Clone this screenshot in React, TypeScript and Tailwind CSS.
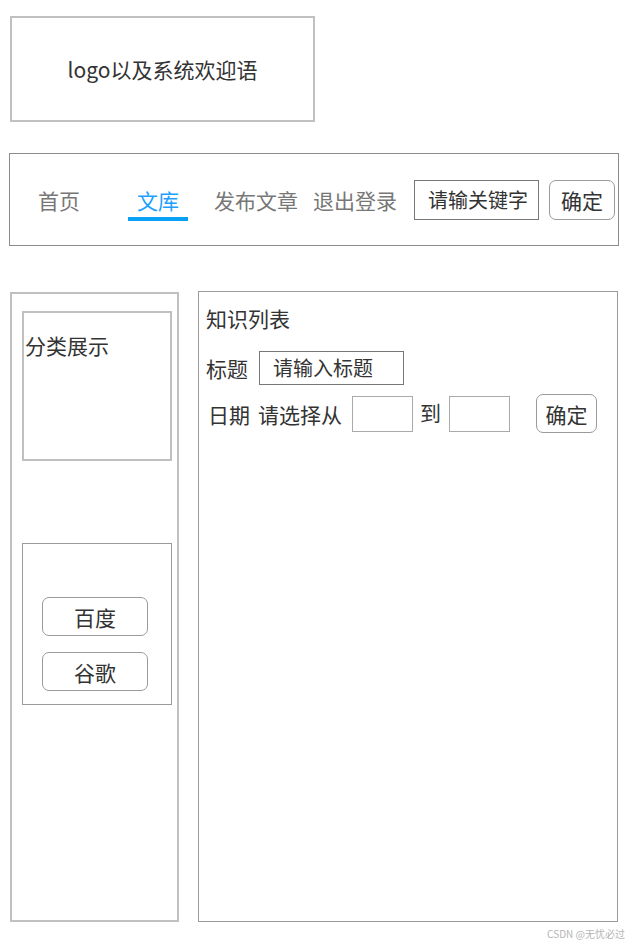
import React from "react";

const font = "font-['Noto_Sans_CJK_SC','Noto_Sans',sans-serif]";

export default function App() {
  return (
    <div className={`w-[632px] h-[945px] bg-white text-[#333] ${font}`}>
      <div className="pt-[16px] pl-[10px]">
        <div className="w-[305px] h-[106px] border-2 border-[#c0c0c0] flex items-center justify-center text-[21px] leading-[28px] text-[#333]">
          logo以及系统欢迎语
        </div>
      </div>

      <div className="mt-[31px] ml-[9px] w-[610px] h-[93px] border border-[#8c8c8c] flex items-center text-[21px] leading-[28px]">
        <div className="ml-[28px] text-[#777]">首页</div>
        <div className="ml-[48px] w-[60px] relative text-center text-[#1e9fff]">
          文库
          <span className="absolute left-0 top-[31px] w-[60px] h-[4px] bg-[#0aa0f5]" />
        </div>
        <div className="ml-[26px] text-[#777]">发布文章</div>
        <div className="ml-[15px] text-[#777]">退出登录</div>
        <div className="ml-[17px] w-[125px] h-[40px] border border-[#777] flex items-center pl-[13px] text-[#333] text-[20px]">
          请输关键字
        </div>
        <div className="ml-[10px] w-[66px] h-[40px] border border-[#9a9a9a] rounded-[7px] flex items-center justify-center text-[#333]">
          确定
        </div>
      </div>

      <div className="mt-[45px] flex items-start text-[21px] leading-[28px]">
        <div className="mt-[1px] ml-[10px] w-[169px] h-[630px] border-2 border-[#c0c0c0]">
          <div className="mt-[17px] ml-[10px] w-[150px] h-[150px] border-2 border-[#c0c0c0] pt-[18px] pl-[1px]">
            分类展示
          </div>
          <div className="mt-[82px] ml-[10px] w-[150px] h-[162px] border border-[#9a9a9a] pt-[53px] pl-[19px] flex flex-col gap-[16px]">
            <div className="w-[106px] h-[39px] border border-[#9a9a9a] rounded-[7px] flex items-center justify-center">
              百度
            </div>
            <div className="w-[106px] h-[39px] border border-[#9a9a9a] rounded-[7px] flex items-center justify-center">
              谷歌
            </div>
          </div>
        </div>

        <div className="ml-[19px] w-[420px] h-[631px] border border-[#9a9a9a] pl-[7px] pt-[12px]">
          <div>知识列表</div>
          <div className="mt-[19px] flex items-center h-[34px]">
            <div>标题</div>
            <div className="ml-[11px] w-[145px] h-[34px] border border-[#777] flex items-center pl-[13px] text-[20px]">
              请输入标题
            </div>
          </div>
          <div className="mt-[9px] flex items-center h-[39px]">
            <div className="ml-[2px]">日期</div>
            <div className="ml-[8px]">请选择从</div>
            <div className="ml-[10px] w-[61px] h-[36px] border border-[#aaa]" />
            <div className="ml-[7px] -mt-[4px]">到</div>
            <div className="ml-[8px] w-[61px] h-[36px] border border-[#aaa]" />
            <div className="ml-[26px] w-[61px] h-[39px] border border-[#9a9a9a] rounded-[7px] flex items-center justify-center">
              确定
            </div>
          </div>
        </div>
      </div>

      <div className="mt-[5px] pr-[7px] text-right text-[10px] leading-[14px] text-[#b5b5b5]">
        CSDN @无忧必过
      </div>
    </div>
  );
}
